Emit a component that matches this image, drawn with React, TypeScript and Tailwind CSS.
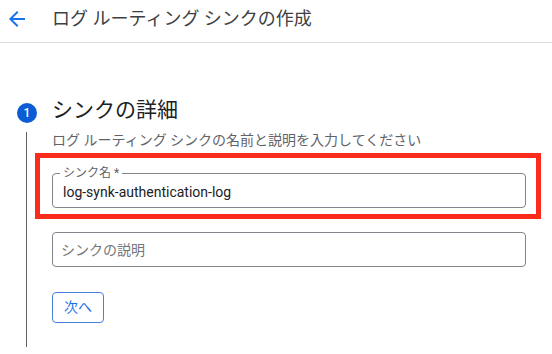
import React from "react";

const font = "font-['Roboto','Noto_Sans_CJK_JP',sans-serif]";

const App = () => {
  return (
    <div className={`w-[552px] h-[354px] bg-white overflow-hidden ${font}`}>
      {/* Header */}
      <div className="box-border h-[43px] border-b border-[#dadce0] flex items-start pt-[7px] pl-[5px]">
        <svg width="24" height="24" viewBox="0 0 24 24" className="shrink-0">
          <path
            d="M20 11H7.83l5.59-5.59L12 4l-8 8 8 8 1.41-1.41L7.83 13H20v-2z"
            fill="#1a73e8"
          />
        </svg>
        <h1 className="ml-[23px] text-[18px] leading-[24px] text-[#3c4043] font-normal">
          ログ ルーティング シンクの作成
        </h1>
      </div>

      {/* Step 1 */}
      <div className="mt-[55px] flex">
        <div className="w-[52px] pl-[17px] flex flex-col">
          <div className="mt-[5px] w-5 h-5 rounded-full bg-[#0b5cd5] text-white text-[12px] font-medium flex items-center justify-center">
            1
          </div>
          <div className="ml-[9px] mt-[9px] w-px flex-1 bg-[#5f6368]" />
        </div>

        <div className="w-[474px] pb-[24px]">
          <h2 className="text-[21px] leading-[24px] text-[#202124] font-normal">
            シンクの詳細
          </h2>
          <p className="mt-[8px] text-[14px] leading-[20px] text-[#5f6368]">
            ログ ルーティング シンクの名前と説明を入力してください
          </p>

          {/* Highlighted name field */}
          <div className="mt-[3px] -ml-[17px] w-[506px] border-[5px] border-[#fc2c1d] pt-[15px] pb-[6px] pl-[12px] pr-[10px]">
            <div className="relative h-[35px] border border-[#80868b] rounded-[4px] pt-[8px] pl-[10px]">
              <span className="absolute left-[7px] -top-[9px] px-[3px] bg-white text-[12px] leading-[16px] text-[#5f6368]">
                シンク名 *
              </span>
              <div className="text-[14px] leading-[20px] text-[#202124]">
                log-synk-authentication-log
              </div>
            </div>
          </div>

          {/* Description field */}
          <div className="mt-[13px] h-[35px] border border-[#80868b] rounded-[4px] flex items-center pl-[8px]">
            <span className="text-[14px] leading-[20px] text-[#757575]">
              シンクの説明
            </span>
          </div>

          <button className="mt-[25px] w-[52px] h-[31px] border border-[#4a80e0] rounded-[4px] text-[14px] text-[#1a73e8] flex items-center justify-center bg-white">
            次へ
          </button>
        </div>
      </div>
    </div>
  );
};

export default App;
